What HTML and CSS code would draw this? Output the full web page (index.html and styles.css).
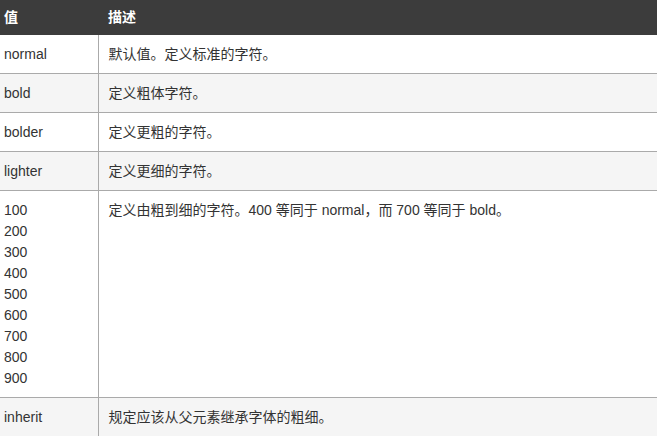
FILE: index.html
```html
<!DOCTYPE html>
<html lang="zh-CN">
<head>
    <meta charset="UTF-8">
    <title>font-weight 属性值</title>
    <link rel="stylesheet" href="styles.css">
</head>
<body>
    <table class="data-table">
        <tr>
            <th class="col-value">值</th>
            <th>描述</th>
        </tr>
        <tr>
            <td class="col-value">normal</td>
            <td>默认值。定义标准的字符。</td>
        </tr>
        <tr>
            <td class="col-value">bold</td>
            <td>定义粗体字符。</td>
        </tr>
        <tr>
            <td class="col-value">bolder</td>
            <td>定义更粗的字符。</td>
        </tr>
        <tr>
            <td class="col-value">lighter</td>
            <td>定义更细的字符。</td>
        </tr>
        <tr>
            <td class="col-value">
                <ul class="value-list">
                    <li>100</li>
                    <li>200</li>
                    <li>300</li>
                    <li>400</li>
                    <li>500</li>
                    <li>600</li>
                    <li>700</li>
                    <li>800</li>
                    <li>900</li>
                </ul>
            </td>
            <td>定义由粗到细的字符。400 等同于 normal，而 700 等同于 bold。</td>
        </tr>
        <tr>
            <td class="col-value">inherit</td>
            <td>规定应该从父元素继承字体的粗细。</td>
        </tr>
    </table>
</body>
</html>
```

FILE: styles.css
```css
* {
    margin: 0;
    padding: 0;
    box-sizing: border-box;
}

body {
    font-family: "Liberation Sans", Arial, "Noto Sans CJK SC", sans-serif;
    font-size: 14px;
    color: #333;
    background: #fff;
}

/* Data table */
.data-table {
    width: 680px;
    border-collapse: collapse;
}

.data-table th {
    background: #3c3c3c;
    color: #fff;
    font-weight: bold;
    text-align: left;
    height: 35px;
    padding: 0 10px;
    line-height: 21px;
}

.data-table td {
    vertical-align: top;
    padding: 9px 10px 8px 10px;
    line-height: 21px;
    border-top: 1px solid #aaa;
}

.data-table tr:nth-child(2) td {
    border-top: none;
    padding-top: 9px;
}

.data-table tr:nth-child(odd) td {
    background: #f5f5f5;
}

.data-table tr:nth-child(even) td {
    background: #fff;
}

.data-table .col-value {
    width: 98px;
    padding-left: 4px;
    border-right: 1px solid #aaa;
}

.data-table th.col-value {
    border-right: none;
}

.value-list {
    list-style: none;
}
```
